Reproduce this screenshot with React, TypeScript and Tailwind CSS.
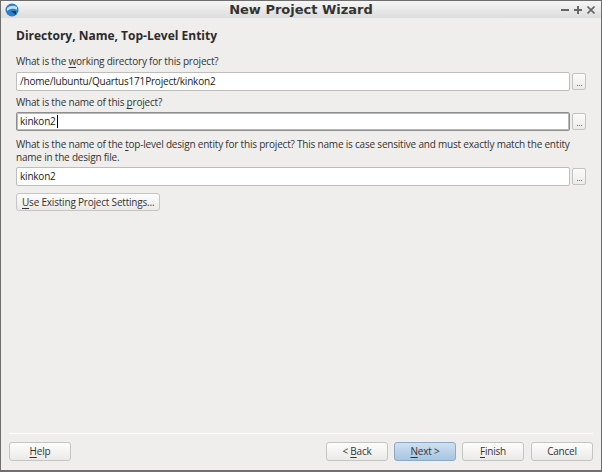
import React from 'react';

const font = { fontFamily: '"Open Sans", "Noto Sans", sans-serif' };

function Mnemonic({ text, at }: { text: string; at: number }) {
  return (
    <>
      {text.slice(0, at)}
      <span className="underline underline-offset-2">{text[at]}</span>
      {text.slice(at + 1)}
    </>
  );
}

function Field({ value, focused }: { value: string; focused?: boolean }) {
  return (
    <div className="flex items-center gap-[2px]">
      <div
        className={
          'flex-1 h-[19px] bg-white rounded-[2px] flex items-center px-[3px] text-[10px] tracking-[-0.2px] text-[#222] ' +
          (focused ? 'border border-[#8e8e8e] shadow-[inset_0_0_0_1px_#b9b9b9]' : 'border border-[#bdbdbb]')
        }
      >
        {value}
        {focused && <span className="inline-block w-px h-[13px] bg-black ml-px" />}
      </div>
      <button className="w-[14px] h-[17px] border border-[#c3c3c1] rounded-[2px] bg-gradient-to-b from-[#fbfbfb] to-[#ecebea] flex items-end justify-center pb-[3px]">
        <span className="flex gap-[1px]">
          <span className="w-px h-px bg-[#5b6eb0]" />
          <span className="w-px h-px bg-[#5b6eb0]" />
          <span className="w-px h-px bg-[#5b6eb0]" />
        </span>
      </button>
    </div>
  );
}

function Btn({ children, primary, className = '' }: { children: React.ReactNode; primary?: boolean; className?: string }) {
  return (
    <button
      className={
        'h-[19px] w-[62px] rounded-[3px] text-[10px] tracking-[-0.2px] text-[#333] flex items-center justify-center ' +
        (primary
          ? 'border border-[#8ea9c6] bg-gradient-to-b from-[#cfe0f1] to-[#a9c4e0] '
          : 'border border-[#c5c5c3] bg-gradient-to-b from-[#fdfdfd] to-[#ebeae8] ') +
        className
      }
    >
      <span className="whitespace-pre">{children}</span>
    </button>
  );
}

export default function App() {
  return (
    <div style={font} className="w-[602px] h-[472px] flex flex-col bg-[#efeeec] border border-[#6e6e6e] border-b-2 overflow-hidden">
      {/* title bar */}
      <div className="h-[17px] shrink-0 flex items-center bg-gradient-to-b from-[#f6f6f6] to-[#dcdcdc] relative">
        <svg width="16" height="16" viewBox="0 0 16 16" className="ml-[3px]">
          <circle cx="8" cy="8" r="6.5" fill="#2a7fc8" />
          <path d="M3 6 Q8 2 13 5 L13 8 Q8 5 3 9 Z" fill="#bfe0f7" />
          <path d="M7 9 L12 9 L12 13 Z" fill="#0e3f74" />
        </svg>
        <div
          style={{ fontFamily: '"DejaVu Sans", sans-serif' }}
          className="absolute inset-0 flex items-center justify-center text-[13px] font-bold text-[#333]"
        >
          New Project Wizard
        </div>
        <div className="ml-auto mr-[6px] flex items-center gap-[5px]">
          <svg width="8" height="8" viewBox="0 0 8 8"><path d="M0 4h8" stroke="#666" strokeWidth="2" /></svg>
          <svg width="8" height="8" viewBox="0 0 8 8"><path d="M0 4h8M4 0v8" stroke="#666" strokeWidth="2" /></svg>
          <svg width="8" height="8" viewBox="0 0 8 8"><path d="M0.5 0.5l7 7M7.5 0.5l-7 7" stroke="#666" strokeWidth="1.6" /></svg>
        </div>
      </div>

      {/* body */}
      <div className="flex-1 flex flex-col px-[15px] pt-[8px] text-[10px] tracking-[-0.2px] text-[#333]">
        <div className="text-[12px] tracking-normal font-bold text-[#2b2b2b] h-[20px] leading-[20px]">
          Directory, Name, Top-Level Entity
        </div>
        <div className="mt-[8px] h-[15px] leading-[15px]">
          What is the <Mnemonic text="working" at={0} /> directory for this project?
        </div>
        <div className="mt-[3px]"><Field value="/home/lubuntu/Quartus171Project/kinkon2" /></div>
        <div className="mt-[4px] h-[15px] leading-[15px]">
          What is the name of this <Mnemonic text="project" at={0} />?
        </div>
        <div className="mt-[2px]"><Field value="kinkon2" focused /></div>
        <div className="mt-[7px] leading-[13px]">
          What is the name of the <Mnemonic text="top-level" at={0} /> design entity for this project? This name is case sensitive and must exactly match the entity name in the design file.
        </div>
        <div className="mt-[3px]"><Field value="kinkon2" /></div>
        <div className="mt-[7px] flex">
          <button className="h-[18px] px-[5px] rounded-[3px] flex items-center border border-[#c5c5c3] bg-gradient-to-b from-[#fdfdfd] to-[#ebeae8]">
            <span className="whitespace-pre"><Mnemonic text="Use" at={0} /> Existing Project Settings...</span>
          </button>
        </div>
      </div>

      {/* footer */}
      <div className="shrink-0 px-[8px] pb-[9px]">
        <div className="h-px bg-[#d6d5d3] border-b border-white mb-[8px]" />
        <div className="flex items-center">
          <Btn><Mnemonic text="Help" at={0} /></Btn>
          <div className="ml-auto flex gap-[6px]">
            <Btn>&lt; <Mnemonic text="Back" at={0} /></Btn>
            <Btn primary><Mnemonic text="Next" at={0} /> &gt;</Btn>
            <Btn><Mnemonic text="Finish" at={0} /></Btn>
            <Btn className="ml-px">Cancel</Btn>
          </div>
        </div>
      </div>
    </div>
  );
}
